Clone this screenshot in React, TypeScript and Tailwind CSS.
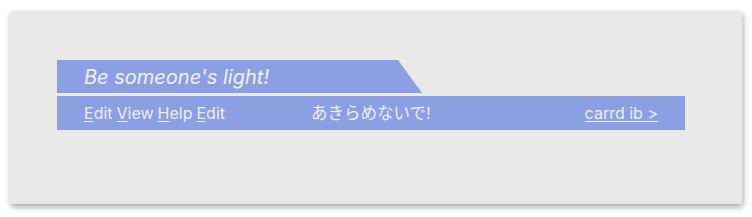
import React from 'react';

const menu = [
  { key: 'E', rest: 'dit' },
  { key: 'V', rest: 'iew' },
  { key: 'H', rest: 'elp' },
  { key: 'E', rest: 'dit' },
];

export default function App() {
  return (
    <div className="w-[752px] h-[217px] bg-white pt-[11px] pl-[10px] font-['Inter','Noto_Sans_CJK_JP',sans-serif]">
      <div className="w-[732px] h-[193px] bg-[#e9e9e9] shadow-[1px_3px_6px_rgba(0,0,0,0.35)] pt-[49px] pl-[47px]">
        {/* Title tab */}
        <div className="w-[365px] h-[33px] bg-[#8b9fe3] [clip-path:polygon(0_0,341px_0,100%_100%,0_100%)] flex items-center pl-[27px]">
          <span className="text-[20px] italic text-[#f2f2f2] leading-none">Be someone's light!</span>
        </div>

        {/* Menu bar */}
        <div className="mt-[3px] w-[628px] h-[34px] bg-[#8b9fe3] grid grid-cols-3 items-center px-[27px] text-[16px] text-[#eeeeee]">
          <div className="flex gap-[4px]">
            {menu.map((m, i) => (
              <span key={i}>
                <span className="underline underline-offset-2 decoration-1">{m.key}</span>
                {m.rest}
              </span>
            ))}
          </div>
          <div className="justify-self-center text-[16.5px]">あきらめないで!</div>
          <div className="justify-self-end underline underline-offset-2 decoration-1">carrd ib &gt;</div>
        </div>
      </div>
    </div>
  );
}
